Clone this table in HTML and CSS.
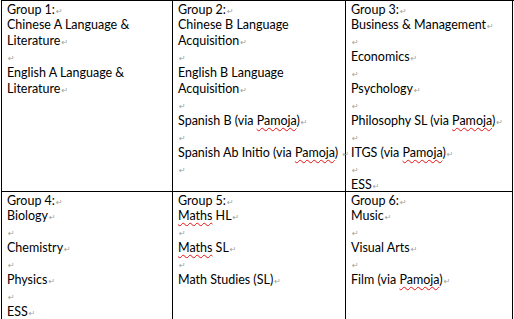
FILE: index.html
```html
<!DOCTYPE html>
<html>
<head>
<meta charset="utf-8">
<link rel="stylesheet" href="styles.css">
</head>
<body>
<div class="grid">
  <div class="cell">
    <div class="inner">
      <p class="g">Group 1:<span class="pm">↵</span></p>
      <p>Chinese A Language &amp; Literature<span class="pm">↵</span></p>
      <p><span class="pm">↵</span></p>
      <p>English A Language &amp; Literature<span class="pm">↵</span></p>
    </div>
  </div>
  <div class="cell">
    <div class="inner">
      <p class="g">Group 2:<span class="pm">↵</span></p>
      <p>Chinese B Language Acquisition<span class="pm">↵</span></p>
      <p><span class="pm">↵</span></p>
      <p>English B Language Acquisition<span class="pm">↵</span></p>
      <p><span class="pm">↵</span></p>
      <p>Spanish B (via <span class="sp">Pamoja</span>)<span class="pm">↵</span></p>
      <p><span class="pm">↵</span></p>
      <p class="nw">Spanish Ab Initio (via <span class="sp">Pamoja</span>) <span class="pm">↵</span></p>
      <p><span class="pm">↵</span></p>
    </div>
  </div>
  <div class="cell">
    <div class="inner">
      <p class="g">Group 3:<span class="pm">↵</span></p>
      <p>Business &amp; Management<span class="pm">↵</span></p>
      <p><span class="pm">↵</span></p>
      <p>Economics<span class="pm">↵</span></p>
      <p><span class="pm">↵</span></p>
      <p>Psychology<span class="pm">↵</span></p>
      <p><span class="pm">↵</span></p>
      <p>Philosophy SL (via <span class="sp">Pamoja</span>)<span class="pm">↵</span></p>
      <p><span class="pm">↵</span></p>
      <p>ITGS (via <span class="sp">Pamoja</span>)<span class="pm">↵</span></p>
      <p><span class="pm">↵</span></p>
      <p>ESS<span class="pm">↵</span></p>
    </div>
  </div>
  <div class="cell">
    <div class="inner">
      <p class="g">Group 4:<span class="pm">↵</span></p>
      <p>Biology<span class="pm">↵</span></p>
      <p><span class="pm">↵</span></p>
      <p>Chemistry<span class="pm">↵</span></p>
      <p><span class="pm">↵</span></p>
      <p>Physics<span class="pm">↵</span></p>
      <p><span class="pm">↵</span></p>
      <p>ESS<span class="pm">↵</span></p>
    </div>
  </div>
  <div class="cell">
    <div class="inner">
      <p class="g">Group 5:<span class="pm">↵</span></p>
      <p><span class="sp">Maths</span> HL<span class="pm">↵</span></p>
      <p><span class="pm">↵</span></p>
      <p><span class="sp">Maths</span> SL<span class="pm">↵</span></p>
      <p><span class="pm">↵</span></p>
      <p>Math Studies (SL)<span class="pm">↵</span></p>
    </div>
  </div>
  <div class="cell">
    <div class="inner">
      <p class="g">Group 6:<span class="pm">↵</span></p>
      <p>Music<span class="pm">↵</span></p>
      <p><span class="pm">↵</span></p>
      <p>Visual Arts<span class="pm">↵</span></p>
      <p><span class="pm">↵</span></p>
      <p>Film (via <span class="sp">Pamoja</span>)<span class="pm">↵</span></p>
    </div>
  </div>
</div>
</body>
</html>
```
FILE: styles.css
```css
html, body {
  margin: 0;
  padding: 0;
  background: #fff;
  overflow: hidden;
}
body {
  font-family: Lato, "Liberation Sans", sans-serif;
  font-size: 12.5px;
  color: #000;
}
.grid {
  margin-left: 1px;
  display: grid;
  grid-template-columns: 171px 173px 167px;
  grid-template-rows: 191px 160px;
  border-top: 1px solid #000;
  border-left: 1px solid #000;
}
.cell {
  box-sizing: border-box;
  border-right: 1px solid #000;
  border-bottom: 1px solid #000;
  padding: 0 5px 0 5px;
  overflow: visible;
  position: relative;
}
.inner {
  margin-top: 1.5px;
}
p {
  margin: 0;
  line-height: 16.1px;
}
p.g {
  line-height: 14px;
}
p.nw {
  white-space: nowrap;
}
.pm {
  font-family: "DejaVu Sans", sans-serif;
  font-size: 8px;
  line-height: 0;
  color: #a0a0a0;
  margin-left: 1px;
}
.sp {
  text-decoration: underline wavy #e81010;
  text-decoration-thickness: 1px;
  text-underline-offset: 2px;
}
```
